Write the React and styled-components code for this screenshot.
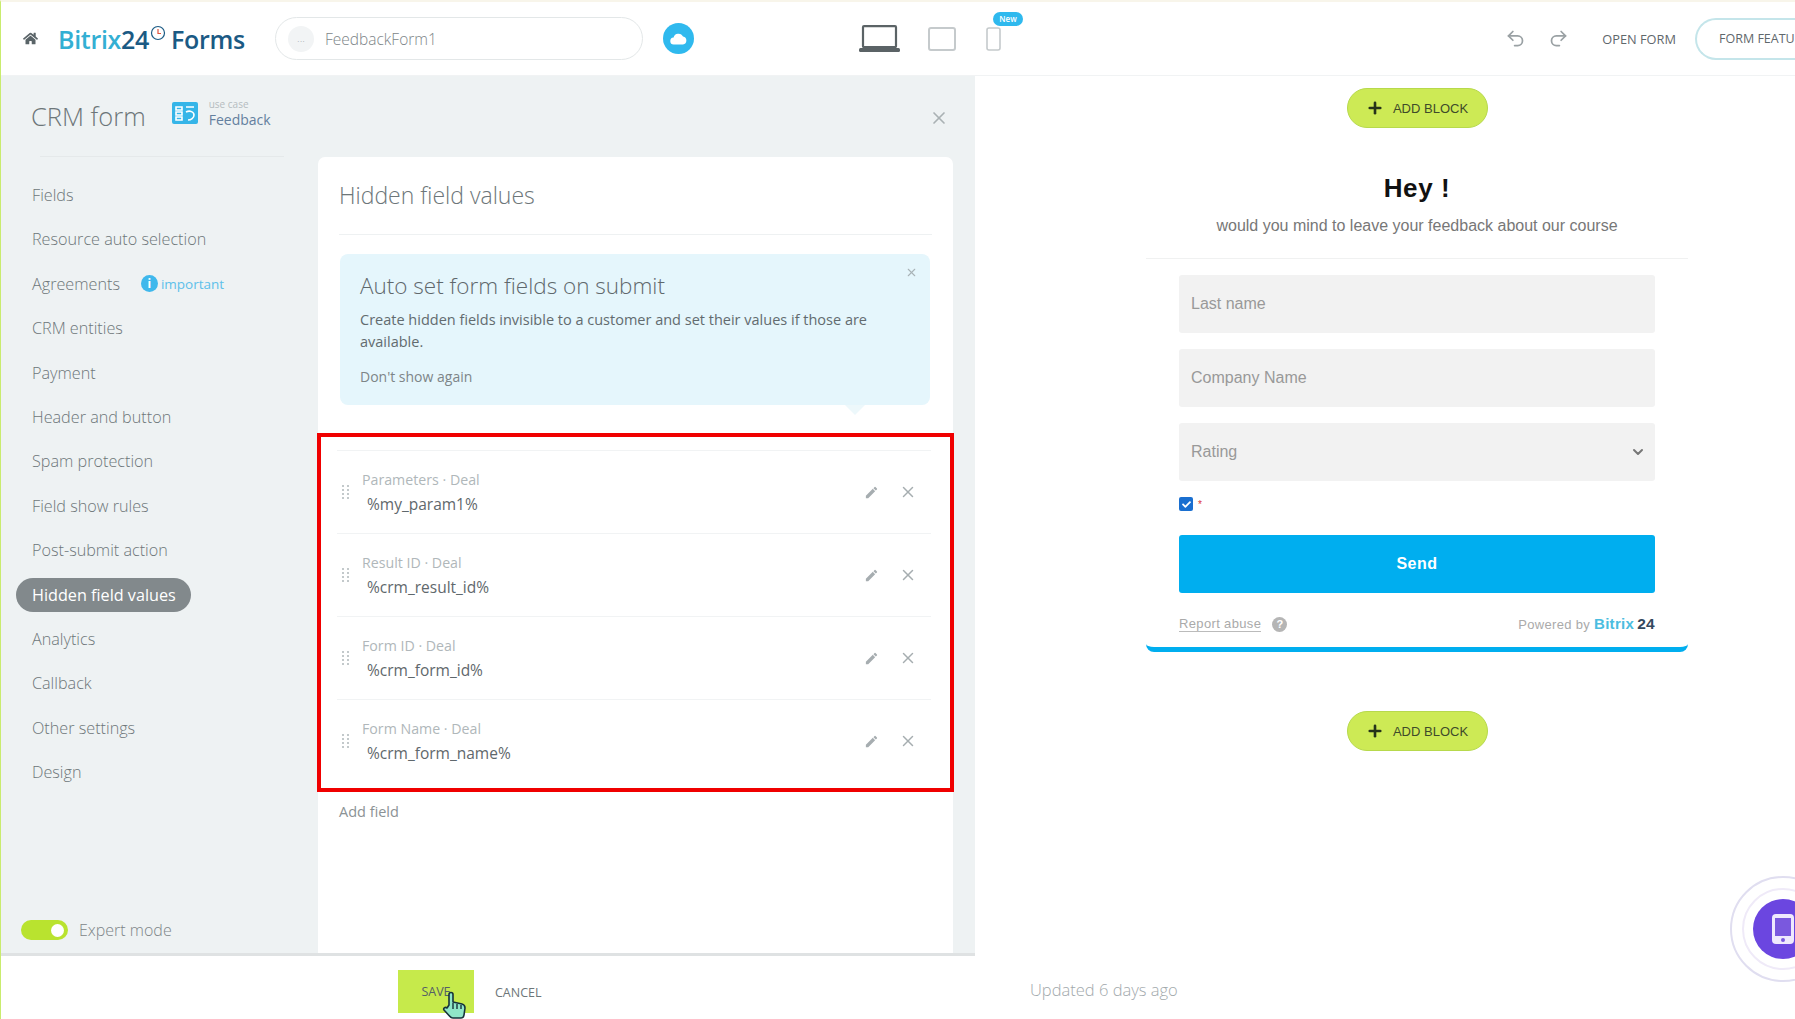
import React from 'react';
import styled, { createGlobalStyle } from 'styled-components';
import { FaHome, FaCheck } from 'react-icons/fa';
import { LuUndo2, LuRedo2, LuChevronDown, LuX, LuPlus } from 'react-icons/lu';
import { MdEdit } from 'react-icons/md';

const GlobalStyle = createGlobalStyle`
  html, body {
    margin: 0;
    padding: 0;
    width: 1795px;
    height: 1019px;
    overflow: hidden;
    background: #fff;
    font-family: "Open Sans", "Liberation Sans", sans-serif;
  }
  * { box-sizing: border-box; }
`;

const Page = styled.div`
  width: 1795px;
  height: 1019px;
  position: relative;
  overflow: hidden;
  display: flex;
  flex-direction: column;
  border-top: 2px solid #f8f5ea;
  border-left: 1px solid #c9ec6e;
`;

// * header
const Header = styled.header`
  height: 74px;
  flex: none;
  display: flex;
  align-items: center;
  padding-left: 22px;
  background: #fff;
  border-bottom: 1px solid #f1f3f4;
`;

const HomeLink = styled.span`
  display: flex;
  color: #5a6468;
  font-size: 15px;
  margin-right: 20px;
`;

const Logo = styled.div`
  width: 217px;
  display: flex;
  align-items: flex-start;
  font-size: 25px;
  font-weight: 600;
  letter-spacing: -0.3px;
  white-space: nowrap;
`;

const LogoBlue = styled.span`
  color: #33afd3;
`;

const LogoDark = styled.span`
  color: #1b5a84;
`;

const LogoClock = styled.svg`
  width: 16px;
  height: 16px;
  margin: 3px 5px 0 1px;
`;

const NameField = styled.div`
  width: 368px;
  height: 43px;
  display: flex;
  align-items: center;
  gap: 11px;
  padding-left: 12px;
  border: 1px solid #e3e7e8;
  border-radius: 22px;
  color: #7d8588;
  font-size: 15.5px;
  font-weight: 300;
`;

const NameDots = styled.span`
  width: 26px;
  height: 26px;
  border-radius: 50%;
  background: #f2f4f5;
  color: #a9b0b3;
  font-size: 11px;
  line-height: 24px;
  text-align: center;
`;

const CloudButton = styled.span`
  width: 31px;
  height: 31px;
  margin-left: 20px;
  display: flex;
  align-items: center;
  justify-content: center;
  border-radius: 50%;
  background: #2fb9ee;
`;

const Devices = styled.div`
  margin-left: 165px;
  display: flex;
  align-items: center;
  position: relative;
`;

const DeviceIcon = styled.svg`
  display: block;
  margin-right: ${(p) => p.$gap}px;
`;

const NewBadge = styled.span`
  position: absolute;
  top: -13px;
  right: -22px;
  width: 30px;
  height: 14px;
  border-radius: 8px;
  background: #2fb9ee;
  color: #fff;
  font-size: 8px;
  font-weight: 600;
  line-height: 14px;
  text-align: center;
`;

const HeaderActions = styled.div`
  margin-left: auto;
  display: flex;
  align-items: center;
  color: #9aa1a4;
  font-size: 21px;
`;

const UndoButton = styled.span`
  display: flex;
  margin-right: ${(p) => p.$gap}px;
`;

const OpenForm = styled.span`
  color: #5f686c;
  font-size: 12.8px;
  white-space: nowrap;
  margin-right: 19px;
`;

const FeaturesPill = styled.span`
  width: 132px;
  height: 42px;
  margin-right: -32px;
  padding-left: 22px;
  display: flex;
  align-items: center;
  border: 2px solid #c4e5ea;
  border-right: 0;
  border-radius: 21px 0 0 21px;
  color: #5f686c;
  font-size: 12.5px;
  white-space: nowrap;
  overflow: hidden;
`;

const Body = styled.div`
  flex: 1;
  min-height: 0;
  display: flex;
`;

// * left editor panel
const Panel = styled.section`
  width: 974px;
  flex: none;
  display: flex;
  flex-direction: column;
`;

const PanelMain = styled.div`
  flex: 1;
  min-height: 0;
  display: flex;
  background: #eef2f3;
  border-bottom: 3px solid #dfe2e3;
  position: relative;
`;

const Sidebar = styled.aside`
  width: 317px;
  flex: none;
  display: flex;
  flex-direction: column;
`;

const SidebarHead = styled.div`
  height: 81px;
  margin: 0 34px 0 0;
  padding: 22px 0 0 30px;
  display: flex;
  align-items: flex-start;
  position: relative;

  &::after {
    content: '';
    position: absolute;
    left: 39px;
    right: 0;
    bottom: 0;
    height: 1px;
    background: #e5e9ea;
  }
`;

const PanelTitle = styled.h1`
  margin: 0 26px 0 0;
  color: #6d7679;
  font-size: 25.5px;
  font-weight: 300;
  line-height: 36px;
  white-space: nowrap;
`;

const CaseIcon = styled.svg`
  margin: 4px 11px 0 0;
  flex: none;
`;

const CaseText = styled.div`
  display: flex;
  flex-direction: column;
  white-space: nowrap;
  margin-top: -1px;
`;

const CaseLabel = styled.span`
  color: #b5bcbf;
  font-size: 10px;
  line-height: 14px;
`;

const CaseValue = styled.span`
  color: #64809e;
  font-size: 14px;
  line-height: 18px;
`;

const NavList = styled.nav`
  margin-top: 21px;
  padding-left: 15px;
  display: flex;
  flex-direction: column;
  gap: 10.4px;
`;

const NavItem = styled.div`
  height: 34px;
  width: ${(p) => (p.$active ? '175px' : 'auto')};
  padding-left: 16px;
  display: flex;
  align-items: center;
  border-radius: 17px;
  background: ${(p) => (p.$active ? '#82898c' : 'transparent')};
  color: ${(p) => (p.$active ? '#fff' : '#6d7679')};
  font-size: 16.2px;
  font-weight: ${(p) => (p.$active ? 400 : 300)};
  white-space: nowrap;
`;

const Important = styled.span`
  margin-left: 21px;
  display: flex;
  align-items: center;
  gap: 3px;
  color: #5cc0ea;
  font-size: 13.5px;
  font-weight: 400;
`;

const InfoDot = styled.span`
  width: 17px;
  height: 17px;
  border-radius: 50%;
  background: #3fb8ec;
  color: #fff;
  font-size: 12px;
  font-weight: 700;
  line-height: 17px;
  text-align: center;
`;

const ExpertRow = styled.div`
  margin-top: auto;
  padding: 0 0 12px 20px;
  display: flex;
  align-items: center;
  gap: 11px;
  color: #7d8588;
  font-size: 16px;
  font-weight: 300;
`;

const ToggleTrack = styled.span`
  width: 47px;
  height: 20px;
  padding-right: 4px;
  display: flex;
  align-items: center;
  justify-content: flex-end;
  border-radius: 10px;
  background: #b9e32f;
`;

const ToggleKnob = styled.span`
  width: 13px;
  height: 13px;
  border-radius: 50%;
  background: #fff;
`;

const ClosePanel = styled.span`
  position: absolute;
  top: 32px;
  right: 26px;
  display: flex;
  color: #aab1b4;
  font-size: 20px;
`;

const Card = styled.div`
  width: 635px;
  margin-top: 81px;
  padding: 0 21px;
  display: flex;
  flex-direction: column;
  background: #fff;
  border-radius: 7px 7px 0 0;
`;

const CardTitle = styled.h2`
  margin: 0;
  height: 78px;
  padding-top: 18px;
  color: #6d7679;
  font-size: 23px;
  font-weight: 300;
  line-height: 40px;
  border-bottom: 1px solid #eef1f2;
  white-space: nowrap;
`;

const InfoBox = styled.div`
  margin: 19px 2px 0 1px;
  height: 151px;
  padding: 16px 20px 0;
  position: relative;
  background: #e5f6fc;
  border-radius: 8px;

  &::after {
    content: '';
    position: absolute;
    left: 505px;
    bottom: -10px;
    border-left: 10px solid transparent;
    border-right: 10px solid transparent;
    border-top: 10px solid #edf8fb;
  }
`;

const InfoTitle = styled.h3`
  margin: 0 0 7px;
  color: #5f686c;
  font-size: 22.5px;
  font-weight: 300;
  line-height: 32px;
  white-space: nowrap;
`;

const InfoText = styled.p`
  margin: 0;
  color: #626b6f;
  font-size: 14.5px;
  line-height: 22px;
`;

const InfoLink = styled.span`
  display: block;
  margin-top: 14px;
  color: #7d8588;
  font-size: 14px;
  line-height: 20px;
`;

const InfoClose = styled.span`
  position: absolute;
  top: 12px;
  right: 12px;
  display: flex;
  color: #a9b3b7;
  font-size: 13px;
`;

const FieldsFrame = styled.div`
  height: 359px;
  margin: 28px -22px 0;
  padding: 13px 19px 0 16px;
  border: 4px solid #f00000;
`;

const FieldRow = styled.div`
  height: 83px;
  display: flex;
  align-items: center;
  border-top: 1px solid #f1f3f4;
  padding-right: 14px;
`;

const DragHandle = styled.svg`
  flex: none;
  margin: 0 13px 0 5px;
`;

const FieldInfo = styled.div`
  flex: 1;
  display: flex;
  flex-direction: column;
  gap: 4px;
`;

const FieldLabel = styled.span`
  color: #b0b7ba;
  font-size: 14.2px;
  line-height: 19px;
  white-space: nowrap;
`;

const FieldValue = styled.span`
  padding-left: 5px;
  color: #5f686c;
  font-size: 15.5px;
  line-height: 22px;
  white-space: nowrap;
`;

const RowAction = styled.span`
  display: flex;
  margin-left: ${(p) => p.$gap}px;
  color: #a6adb0;
  font-size: ${(p) => p.$size}px;
`;

const AddField = styled.span`
  margin-top: 9px;
  color: #8b9295;
  font-size: 14.5px;
  line-height: 22px;
`;

const PanelFooter = styled.footer`
  height: 63px;
  flex: none;
  padding: 14px 0 0 397px;
  display: flex;
  align-items: flex-start;
  gap: 21px;
  background: #fff;
`;

const SaveButton = styled.span`
  width: 76px;
  height: 43px;
  display: flex;
  align-items: center;
  justify-content: center;
  position: relative;
  background: #c6ea4b;
  color: #556066;
  font-size: 12.5px;
`;

const CancelButton = styled.span`
  height: 43px;
  display: flex;
  align-items: center;
  color: #6d7679;
  font-size: 12.5px;
  padding-top: 2px;
`;

const HandCursor = styled.svg`
  position: absolute;
  left: 44px;
  top: 21px;
`;

// * right form preview
const Preview = styled.section`
  flex: 1;
  display: flex;
  flex-direction: column;
  align-items: center;
  padding: 12px 0 0 64px;
  position: relative;
`;

const AddBlock = styled.button`
  width: 141px;
  height: 40px;
  margin: 0;
  padding: 0;
  flex: none;
  display: flex;
  align-items: center;
  justify-content: center;
  gap: 9px;
  border: 1px solid #b7d94c;
  border-radius: 20px;
  background: #cdea55;
  color: #3f4a2a;
  font-family: "Liberation Sans", sans-serif;
  font-size: 13px;
`;

const PlusMark = styled.span`
  display: flex;
  color: #26331a;
  font-size: 18px;
`;

const FormCard = styled.div`
  width: 542px;
  height: 505px;
  flex: none;
  margin: 19px 0 59px;
  padding: 0 33px;
  display: flex;
  flex-direction: column;
  border-bottom: 5px solid #00aeef;
  border-radius: 0 0 8px 8px;
  font-family: "Liberation Sans", sans-serif;
`;

const FormHead = styled.div`
  height: 112px;
  margin: 0 -33px 16px;
  padding-top: 24px;
  border-bottom: 1px solid #f0f1f1;
  text-align: center;
`;

const FormTitle = styled.h2`
  margin: 0;
  color: #111;
  font-size: 26px;
  line-height: 34px;
  font-weight: 700;
  letter-spacing: 0.6px;
`;

const FormSubtitle = styled.p`
  margin: 11px 0 0;
  color: #777;
  font-size: 16px;
  line-height: 20px;
`;

const FormInput = styled.div`
  height: 58px;
  margin-bottom: 16px;
  padding: 0 12px;
  display: flex;
  align-items: center;
  justify-content: space-between;
  border-radius: 3px;
  background: #f2f2f2;
  color: #999;
  font-size: 16px;
`;

const SelectArrow = styled.span`
  display: flex;
  margin-right: -3px;
  color: #777;
  font-size: 16px;
`;

const ConsentRow = styled.div`
  display: flex;
  align-items: center;
  gap: 5px;
  height: 14px;
  margin: 0 0 24px;
  color: #d33;
  font-size: 10px;
`;

const CheckBox = styled.span`
  width: 14px;
  height: 14px;
  display: flex;
  align-items: center;
  justify-content: center;
  border-radius: 2px;
  background: #1a6fd0;
  color: #fff;
  font-size: 9px;
`;

const SendButton = styled.div`
  height: 58px;
  display: flex;
  align-items: center;
  justify-content: center;
  border-radius: 3px;
  background: #00aeef;
  color: #fff;
  font-size: 16px;
  font-weight: 700;
  letter-spacing: 0.5px;
`;

const FormFooter = styled.div`
  margin-top: 22px;
  display: flex;
  align-items: center;
  color: #aaa;
  font-size: 13px;
`;

const ReportLink = styled.span`
  border-bottom: 1px solid #bbb;
  margin-right: 11px;
  letter-spacing: 0.35px;
`;

const HelpDot = styled.span`
  width: 15px;
  height: 15px;
  border-radius: 50%;
  background: #b5b5b5;
  color: #fff;
  font-size: 11px;
  font-weight: 700;
  line-height: 15px;
  text-align: center;
`;

const PoweredBy = styled.span`
  margin-left: auto;
  display: flex;
  align-items: baseline;
  gap: 4px;
  letter-spacing: 0.3px;
`;

const BrandBlue = styled.b`
  color: #4bbde0;
  font-size: 15px;
`;

const BrandDark = styled.b`
  color: #34495e;
  font-size: 15.5px;
  margin-left: -1px;
`;

const UpdatedNote = styled.span`
  position: absolute;
  left: 55px;
  bottom: 18px;
  color: #a2a9ac;
  font-size: 16.5px;
  font-weight: 300;
`;

const FloatingWidget = styled.div`
  position: absolute;
  right: -41px;
  bottom: 37px;
  width: 106px;
  height: 106px;
  display: flex;
  align-items: center;
  justify-content: center;
  border: 2px solid #e0def0;
  border-radius: 50%;
`;

const WidgetRing = styled.div`
  width: 82px;
  height: 82px;
  display: flex;
  align-items: center;
  justify-content: center;
  border: 2px solid #efeaf8;
  border-radius: 50%;
`;

const WidgetCore = styled.div`
  width: 60px;
  height: 60px;
  display: flex;
  align-items: center;
  justify-content: center;
  border-radius: 50%;
  background: #6b46e0;
`;

const navItems = [
  'Fields',
  'Resource auto selection',
  'Agreements',
  'CRM entities',
  'Payment',
  'Header and button',
  'Spam protection',
  'Field show rules',
  'Post-submit action',
  'Hidden field values',
  'Analytics',
  'Callback',
  'Other settings',
  'Design'
];

const hiddenFields = [
  { label: 'Parameters · Deal', value: '%my_param1%' },
  { label: 'Result ID · Deal', value: '%crm_result_id%' },
  { label: 'Form ID · Deal', value: '%crm_form_id%' },
  { label: 'Form Name · Deal', value: '%crm_form_name%' }
];

function App() {
  return (
    <Page>
      <GlobalStyle />
      <Header>
        <HomeLink><FaHome /></HomeLink>
        <Logo>
          <LogoBlue>Bitrix</LogoBlue>
          <LogoDark>24</LogoDark>
          <LogoClock viewBox="0 0 16 16" fill="none" stroke="#1b5a84" strokeWidth="1.2">
            <circle cx="8" cy="8" r="6.5" />
            <path d="M8 4v4.5h3" stroke="#e0533d" />
          </LogoClock>
          <LogoDark>Forms</LogoDark>
        </Logo>
        <NameField>
          <NameDots>...</NameDots>
          FeedbackForm1
        </NameField>
        <CloudButton>
          <svg width="17" height="13" viewBox="0 0 17 13" fill="#fff">
            <path d="M4 12.5a3.5 3.5 0 0 1-.4-7A5 5 0 0 1 13 4.6a4 4 0 0 1 0 7.9z" />
          </svg>
        </CloudButton>
        <Devices>
          <DeviceIcon $gap={28} width="41" height="27" viewBox="0 0 41 27" fill="none">
            <rect x="4" y="1.2" width="33" height="21" rx="1" stroke="#5b6366" strokeWidth="2.2" />
            <rect x="0" y="23" width="41" height="4" rx="1.5" fill="#5b6366" />
          </DeviceIcon>
          <DeviceIcon $gap={30} width="28" height="24" viewBox="0 0 28 24" fill="none">
            <rect x="1" y="1" width="26" height="22" rx="2" stroke="#c5cacc" strokeWidth="2" />
          </DeviceIcon>
          <DeviceIcon $gap={0} width="15" height="24" viewBox="0 0 15 24" fill="none">
            <rect x="1" y="1" width="13" height="22" rx="2" stroke="#c5cacc" strokeWidth="1.6" />
          </DeviceIcon>
          <NewBadge>New</NewBadge>
        </Devices>
        <HeaderActions>
          <UndoButton $gap={22}><LuUndo2 /></UndoButton>
          <UndoButton $gap={33}><LuRedo2 /></UndoButton>
          <OpenForm>OPEN FORM</OpenForm>
          <FeaturesPill>FORM FEATURES</FeaturesPill>
        </HeaderActions>
      </Header>

      <Body>
        <Panel>
          <PanelMain>
            <Sidebar>
              <SidebarHead>
                <PanelTitle>CRM form</PanelTitle>
                <CaseIcon width="26" height="22" viewBox="0 0 26 22">
                  <rect width="26" height="22" rx="2" fill="#35b5e8" />
                  <path d="M4 5h6v3H4zM4 10h6v3H4zM4 15h6v3H4zM14 5h8M14 10c4-2 8 0 8 3s-3 5-6 5" stroke="#fff" strokeWidth="1.6" fill="none" />
                </CaseIcon>
                <CaseText>
                  <CaseLabel>use case</CaseLabel>
                  <CaseValue>Feedback</CaseValue>
                </CaseText>
              </SidebarHead>
              <NavList>
                {navItems.map((item) => (
                  <NavItem key={item} $active={item === 'Hidden field values'}>
                    {item}
                    {item === 'Agreements' && (
                      <Important><InfoDot>i</InfoDot>important</Important>
                    )}
                  </NavItem>
                ))}
              </NavList>
              <ExpertRow>
                <ToggleTrack><ToggleKnob /></ToggleTrack>
                Expert mode
              </ExpertRow>
            </Sidebar>

            <Card>
              <CardTitle>Hidden field values</CardTitle>
              <InfoBox>
                <InfoClose><LuX /></InfoClose>
                <InfoTitle>Auto set form fields on submit</InfoTitle>
                <InfoText>
                  Create hidden fields invisible to a customer and set their values if those are available.
                </InfoText>
                <InfoLink>Don't show again</InfoLink>
              </InfoBox>
              <FieldsFrame>
                {hiddenFields.map((field) => (
                  <FieldRow key={field.value}>
                    <DragHandle width="7" height="16" viewBox="0 0 7 16" fill="#c3c9cb">
                      {[1, 5, 9, 13].map((y) => (
                        <React.Fragment key={y}>
                          <rect x="0" y={y} width="2" height="2" />
                          <rect x="5" y={y} width="2" height="2" />
                        </React.Fragment>
                      ))}
                    </DragHandle>
                    <FieldInfo>
                      <FieldLabel>{field.label}</FieldLabel>
                      <FieldValue>{field.value}</FieldValue>
                    </FieldInfo>
                    <RowAction $gap={0} $size={15}><MdEdit /></RowAction>
                    <RowAction $gap={20} $size={18}><LuX /></RowAction>
                  </FieldRow>
                ))}
              </FieldsFrame>
              <AddField>Add field</AddField>
            </Card>
            <ClosePanel><LuX /></ClosePanel>
          </PanelMain>
          <PanelFooter>
            <SaveButton>
              SAVE
              <HandCursor width="26" height="28" viewBox="0 0 26 28">
                <path d="M7 14V3.5a2 2 0 0 1 4 0V11l9 2c2 .5 3 1.500 3 4l-1 7c-.3 2-1.500 3-3 3h-8c-1.500 0-2.500-.7-3.500-2L2 19c-1-1.500 1-3.500 3-2z" fill="#8fe6c8" stroke="#16323a" strokeWidth="1.6" strokeLinejoin="round" />
                <path d="M11 12v6M15 13v5M19 14v4" stroke="#16323a" strokeWidth="1.4" />
              </HandCursor>
            </SaveButton>
            <CancelButton>CANCEL</CancelButton>
          </PanelFooter>
        </Panel>

        <Preview>
          <AddBlock><PlusMark><LuPlus strokeWidth={3.5} /></PlusMark>ADD BLOCK</AddBlock>
          <FormCard>
            <FormHead>
              <FormTitle>Hey !</FormTitle>
              <FormSubtitle>would you mind to leave your feedback about our course</FormSubtitle>
            </FormHead>
            <FormInput>Last name</FormInput>
            <FormInput>Company Name</FormInput>
            <FormInput>
              Rating
              <SelectArrow><LuChevronDown strokeWidth={3} /></SelectArrow>
            </FormInput>
            <ConsentRow>
              <CheckBox><FaCheck /></CheckBox>
              *
            </ConsentRow>
            <SendButton>Send</SendButton>
            <FormFooter>
              <ReportLink>Report abuse</ReportLink>
              <HelpDot>?</HelpDot>
              <PoweredBy>
                Powered by <BrandBlue>Bitrix</BrandBlue><BrandDark>24</BrandDark>
              </PoweredBy>
            </FormFooter>
          </FormCard>
          <AddBlock><PlusMark><LuPlus strokeWidth={3.5} /></PlusMark>ADD BLOCK</AddBlock>
          <UpdatedNote>Updated 6 days ago</UpdatedNote>
          <FloatingWidget>
            <WidgetRing>
              <WidgetCore>
                <svg width="22" height="30" viewBox="0 0 22 30">
                  <rect width="22" height="30" rx="4" fill="#efe9fd" />
                  <rect x="3" y="4" width="16" height="18" fill="#7a58de" />
                  <circle cx="11" cy="26" r="2" fill="#7a58de" />
                </svg>
              </WidgetCore>
            </WidgetRing>
          </FloatingWidget>
        </Preview>
      </Body>
    </Page>
  );
}

export default App;
